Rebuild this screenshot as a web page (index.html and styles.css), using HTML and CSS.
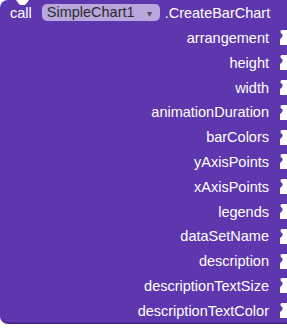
FILE: index.html
```html
<!DOCTYPE html>
<html lang="en">
<head>
  <meta charset="UTF-8">
  <title>CreateBarChart block</title>
  <link rel="stylesheet" href="styles.css">
</head>
<body>

  <div class="block">
    <svg class="notch-top" width="13" height="5" viewBox="0 0 13 5"><path d="M0,0 L3,4 Q4,5 5,5 L8,5 Q9,5 10,4 L13,0 Z" fill="#fff"/></svg>

    <div class="head">
      <span>call</span>
      <span class="dd">SimpleChart1 <span class="arrow">▾</span></span>
      <span>.CreateBarChart</span>
    </div>

    <div class="arg"><span>arrangement</span><svg class="tab" viewBox="0 0 7 15"><path d="M7,0 L2,0 C0,0 0,3 2,4 C4,5 1,9 0,9 L0,15 L7,15 Z" fill="#fff"/></svg></div>
    <div class="arg"><span>height</span><svg class="tab" viewBox="0 0 7 15"><path d="M7,0 L2,0 C0,0 0,3 2,4 C4,5 1,9 0,9 L0,15 L7,15 Z" fill="#fff"/></svg></div>
    <div class="arg"><span>width</span><svg class="tab" viewBox="0 0 7 15"><path d="M7,0 L2,0 C0,0 0,3 2,4 C4,5 1,9 0,9 L0,15 L7,15 Z" fill="#fff"/></svg></div>
    <div class="arg"><span>animationDuration</span><svg class="tab" viewBox="0 0 7 15"><path d="M7,0 L2,0 C0,0 0,3 2,4 C4,5 1,9 0,9 L0,15 L7,15 Z" fill="#fff"/></svg></div>
    <div class="arg"><span>barColors</span><svg class="tab" viewBox="0 0 7 15"><path d="M7,0 L2,0 C0,0 0,3 2,4 C4,5 1,9 0,9 L0,15 L7,15 Z" fill="#fff"/></svg></div>
    <div class="arg"><span>yAxisPoints</span><svg class="tab" viewBox="0 0 7 15"><path d="M7,0 L2,0 C0,0 0,3 2,4 C4,5 1,9 0,9 L0,15 L7,15 Z" fill="#fff"/></svg></div>
    <div class="arg"><span>xAxisPoints</span><svg class="tab" viewBox="0 0 7 15"><path d="M7,0 L2,0 C0,0 0,3 2,4 C4,5 1,9 0,9 L0,15 L7,15 Z" fill="#fff"/></svg></div>
    <div class="arg"><span>legends</span><svg class="tab" viewBox="0 0 7 15"><path d="M7,0 L2,0 C0,0 0,3 2,4 C4,5 1,9 0,9 L0,15 L7,15 Z" fill="#fff"/></svg></div>
    <div class="arg"><span>dataSetName</span><svg class="tab" viewBox="0 0 7 15"><path d="M7,0 L2,0 C0,0 0,3 2,4 C4,5 1,9 0,9 L0,15 L7,15 Z" fill="#fff"/></svg></div>
    <div class="arg"><span>description</span><svg class="tab" viewBox="0 0 7 15"><path d="M7,0 L2,0 C0,0 0,3 2,4 C4,5 1,9 0,9 L0,15 L7,15 Z" fill="#fff"/></svg></div>
    <div class="arg"><span>descriptionTextSize</span><svg class="tab" viewBox="0 0 7 15"><path d="M7,0 L2,0 C0,0 0,3 2,4 C4,5 1,9 0,9 L0,15 L7,15 Z" fill="#fff"/></svg></div>
    <div class="arg"><span>descriptionTextColor</span><svg class="tab" viewBox="0 0 7 15"><path d="M7,0 L2,0 C0,0 0,3 2,4 C4,5 1,9 0,9 L0,15 L7,15 Z" fill="#fff"/></svg></div>

    <svg class="notch-bottom" width="16" height="5" viewBox="0 0 16 5"><path d="M0,0 L4,4 Q5,5 6,5 L10,5 Q11,5 12,4 L16,0 Z" fill="#4a2894"/></svg>
  </div>

</body>
</html>
```

FILE: styles.css
```css
body {
  margin: 0;
  background: #fff;
  font-family: "Liberation Sans", Arial, sans-serif;
}
.block {
  position: relative;
  width: 287px;
  height: 324px;
  box-sizing: border-box;
  background: #5e37ae;
  border-radius: 8px 0 0 8px;
  border-bottom: 2px solid #4a2894;
  color: #fff;
  font-size: 14.5px;
}
.notch-top {
  position: absolute;
  left: 16px;
  top: 0;
}
.notch-bottom {
  position: absolute;
  left: 15px;
  bottom: -7px;
}
.head {
  display: flex;
  align-items: center;
  height: 25.6px;
  padding-left: 10px;
}
.head .dd {
  margin: 0 5px 0 10px;
  height: 17px;
  line-height: 17px;
  padding: 0 8px 0 5px;
  background: #b8a6dd;
  color: #2b2b2b;
  border-radius: 5px;
}
.arrow {
  font-size: 10px;
  color: #555;
  margin-left: 8px;
}
.arg {
  display: flex;
  align-items: center;
  justify-content: flex-end;
  height: 24.8px;
  gap: 11px;
}
.tab {
  width: 7px;
  height: 15px;
  display: block;
}
```
